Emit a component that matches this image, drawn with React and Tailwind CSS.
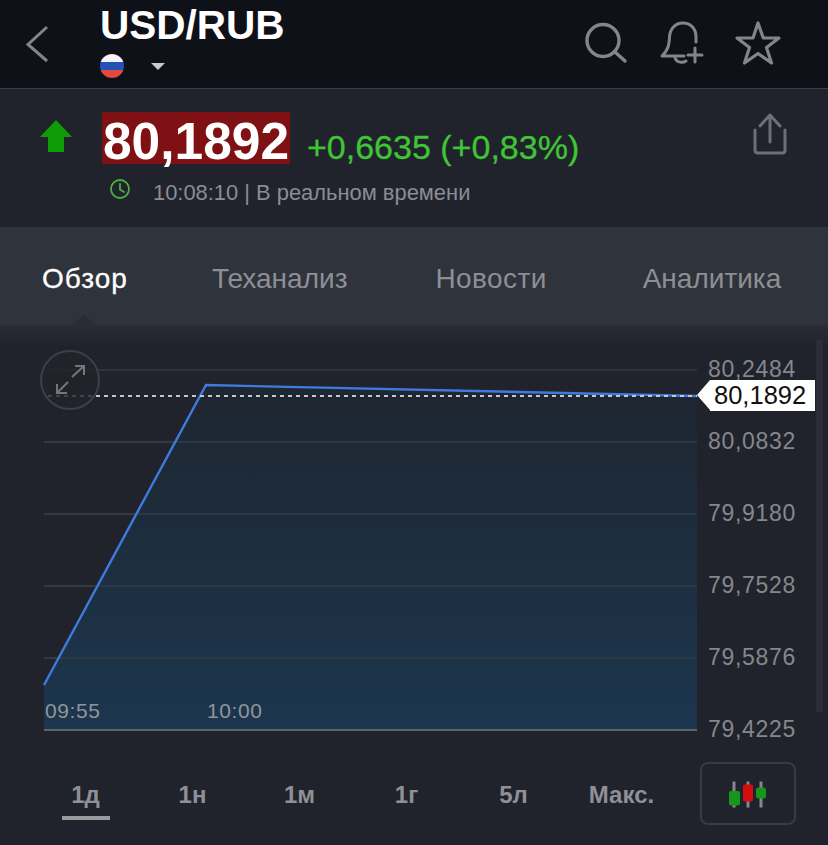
import { useState } from "react";

const tabs = [
  { label: "Обзор", style: "ml-[42px] text-white tracking-[1px] [-webkit-text-stroke:0.3px_#fff]" },
  { label: "Теханализ", style: "ml-[84px] text-[#8d8f95]" },
  { label: "Новости", style: "ml-[88px] text-[#8d8f95] tracking-[0.4px]" },
  { label: "Аналитика", style: "ml-[96px] text-[#8d8f95]" },
];
const ranges = ["1д", "1н", "1м", "1г", "5л", "Макс."];
const gridLines = [370, 442, 514, 586, 658];
const axisLabels = [
  { y: 376, text: "80,2484" },
  { y: 448, text: "80,0832" },
  { y: 520, text: "79,9180" },
  { y: 592, text: "79,7528" },
  { y: 664, text: "79,5876" },
  { y: 736, text: "79,4225" },
];

function Flag() {
  return (
    <div className="w-6 h-6 rounded-full overflow-hidden flex flex-col">
      <div className="h-2 bg-[#f4f4f6]" />
      <div className="h-2 bg-[#2450b8]" />
      <div className="h-2 bg-[#df4b3f]" />
    </div>
  );
}

function Header() {
  return (
    <header className="h-[89px] bg-[#0f1118] border-b border-[#3a3d44] flex">
      <div className="w-[100px] pl-[25px] pt-[25px]">
        <svg width="24" height="38" viewBox="0 0 24 38" fill="none" stroke="#83858b" strokeWidth="3">
          <path d="M22 2 L3 19.5 L22 36" />
        </svg>
      </div>
      <div className="flex-1">
        <h1 className="text-[40.5px] leading-[40px] font-bold text-white mt-[5px]">USD/RUB</h1>
        <div className="flex items-center mt-[9px]">
          <Flag />
          <div className="ml-[27px] w-0 h-0 border-x-[7px] border-x-transparent border-t-[7px] border-t-[#c9cad0]" />
        </div>
      </div>
      <div className="flex items-start pt-[20px] pr-[47px]">
        <svg width="44" height="46" viewBox="0 0 44 46" fill="none" stroke="#83858b" strokeWidth="3.4" strokeLinecap="round" className="mr-[32px]">
          <circle cx="19" cy="20.5" r="16" />
          <path d="M31 32 L41 41" />
        </svg>
        <svg width="44" height="46" viewBox="0 0 44 46" fill="none" stroke="#83858b" strokeWidth="3" strokeLinecap="round" strokeLinejoin="round" className="mr-[31px]">
          <path d="M36 22 V17 C36 8 30 3 23 3 C15 3 10 9 9.5 17 C9 26 8 30 2 36 H24" />
          <path d="M15 38 C17 43 23 43 26 41" />
          <path d="M35 28 V42 M28 35 H42" />
        </svg>
        <svg width="46" height="46" viewBox="0 0 46 46" fill="none" stroke="#83858b" strokeWidth="3.2" strokeLinejoin="round">
          <path d="M23 3 L28.3 18 H44 L31.5 27.5 L36.5 43 L23 33.5 L9.5 43 L14.5 27.5 L2 18 H18 Z" />
        </svg>
      </div>
    </header>
  );
}

function PriceBlock() {
  return (
    <section className="h-[138px] bg-[#20232b] flex">
      <div className="w-[102px] pl-[40px] pt-[31px]">
        <svg width="32" height="33" viewBox="0 0 32 33" fill="#0f9d07">
          <path d="M16 0 L32 17 H24 V32 H8 V17 H0 Z" />
        </svg>
      </div>
      <div className="flex-1 pt-[23px]">
        <div className="flex items-start">
          <span className="h-[52px] bg-[#7f1013] text-white font-bold text-[51.5px] leading-[58px] w-[188px] text-center">80,1892</span>
          <span className="ml-[17px] text-[#3fc535] text-[34px] leading-[38px] mt-[16px] [-webkit-text-stroke:0.3px_#3fc535]">+0,6635 (+0,83%)</span>
        </div>
        <div className="flex items-center mt-[13px] ml-[8px]">
          <svg width="20" height="20" viewBox="0 0 20 20" fill="none" stroke="#4cb13f" strokeWidth="1.8" strokeLinecap="round" className="-mt-[8px]">
            <circle cx="10" cy="10" r="9" />
            <path d="M10 5 V10.5 L14 13" />
          </svg>
          <span className="ml-[23px] text-[#8b8d94] text-[21.9px] leading-[28px]">10:08:10 | В реальном времени</span>
        </div>
      </div>
      <div className="pt-[23px] pr-[41px]">
        <svg width="34" height="44" viewBox="0 0 34 44" fill="none" stroke="#6d6f77" strokeWidth="3" strokeLinecap="round" strokeLinejoin="round">
          <path d="M2 18 V38 Q2 41 5 41 H29 Q32 41 32 38 V18" />
          <path d="M17 30 V3 M7 14 L17 3 L27 14" />
        </svg>
      </div>
    </section>
  );
}

function Tabs() {
  const [items] = useState(tabs);
  return (
    <nav className="relative h-[98px] bg-[#2f333b] flex items-center pt-[5px]">
      {items.map((tab) => (
        <span key={tab.label} className={`text-[28px] ${tab.style}`}>
          {tab.label}
        </span>
      ))}
      {/* little notch under the active tab */}
      <div className="absolute left-[71px] bottom-0 w-0 h-0 border-x-[13px] border-x-transparent border-b-[10px] border-b-[#292c34]" />
    </nav>
  );
}

function Chart() {
  return (
    <div className="relative h-[436px] bg-gradient-to-b from-[#292c34] to-[#20232b] to-[5%]">
      <svg width="828" height="436" viewBox="0 325 828 436" className="block">
        <defs>
          <linearGradient id="areaFill" x1="0" y1="0" x2="0" y2="1">
            <stop offset="0" stopColor="#1e2630" />
            <stop offset="1" stopColor="#1c364e" />
          </linearGradient>
        </defs>
        <rect x="816" y="340" width="7" height="372" fill="#2b2e36" />
        {gridLines.map((y) => (
          <line key={y} x1="44" x2="697" y1={y} y2={y} stroke="#30333b" strokeWidth="2" />
        ))}
        <path d="M44 685 L206 385 L697 396 V730 H44 Z" fill="url(#areaFill)" />
        {gridLines.slice(1).map((y) => (
          <line key={y} x1="44" x2="697" y1={y} y2={y} stroke="#333c46" strokeWidth="1.5" />
        ))}
        <path d="M44 685 L206 385 L697 396" fill="none" stroke="#3f7bdc" strokeWidth="2.4" />
        <line x1="44" x2="697" y1="730" y2="730" stroke="#5d646d" strokeWidth="2" />
        <line x1="48" x2="697" y1="396" y2="396" stroke="#c4c6ca" strokeWidth="2" strokeDasharray="4 4" />
        <circle cx="70" cy="380" r="29" fill="#20232b" fillOpacity="0.8" stroke="#3d4048" strokeWidth="2" />
        <path d="M72 377 L84 366 M75 366 H84 V375 M57 393 L68 382 M57 384 V393 H67" fill="none" stroke="#74767c" strokeWidth="2" />
        <text x="45" y="718" fill="#8f959b" fontSize="21" letterSpacing="0.6">09:55</text>
        <text x="207" y="718" fill="#8f959b" fontSize="21" letterSpacing="0.6">10:00</text>
        {axisLabels.map((a) => (
          <text key={a.text} x="708" y={a.y + 0.5} fill="#85878d" fontSize="23" letterSpacing="0.7">{a.text}</text>
        ))}
      </svg>
      {/* current price tag */}
      <div className="absolute left-[697px] top-[55px] flex h-[31px]">
        <div className="w-0 h-0 border-y-[15.5px] border-y-transparent border-r-[13px] border-r-white" />
        <div className="w-[105px] bg-white text-[#111] text-[25.5px] leading-[31px] pl-[4px]">80,1892</div>
      </div>
    </div>
  );
}

function RangeBar() {
  return (
    <div className="h-[84px] bg-[#20232b] flex items-start">
      <div className="flex pl-[32px] pt-[20px] w-[700px]">
        {ranges.map((r, i) => (
          <div key={r} className={`${i === 5 ? "w-[109px]" : "w-[107px]"} flex flex-col items-center`}>
            <span className="text-[24px] leading-[28px] font-bold text-[#8f9096]">{r}</span>
            {i === 0 && <div className="w-[48px] h-[4px] bg-[#9a9a9f] mt-[7px]" />}
          </div>
        ))}
      </div>
      <div className="mt-[1px] w-[96px] h-[63px] rounded-[8px] border-2 border-[#383b43] flex items-center justify-center">
        <svg width="38" height="28" viewBox="0 0 38 28">
          <rect x="3.5" y="1.5" width="3" height="26" fill="#85878d" />
          <rect x="17.5" y="1.5" width="3" height="26" fill="#85878d" />
          <rect x="30.5" y="1.5" width="3" height="26" fill="#85878d" />
          <rect x="0" y="11" width="11" height="14.5" rx="2" fill="#17961c" />
          <rect x="14" y="4.5" width="10" height="17" rx="1.5" fill="#d40e0e" />
          <rect x="27" y="7.5" width="10" height="11" rx="2.5" fill="#17961c" />
        </svg>
      </div>
    </div>
  );
}

export default function App() {
  return (
    <div className="w-[828px] h-[845px] overflow-hidden bg-[#20232b] font-['Liberation_Sans',Arial,sans-serif]">
      <Header />
      <PriceBlock />
      <Tabs />
      <Chart />
      <RangeBar />
    </div>
  );
}
